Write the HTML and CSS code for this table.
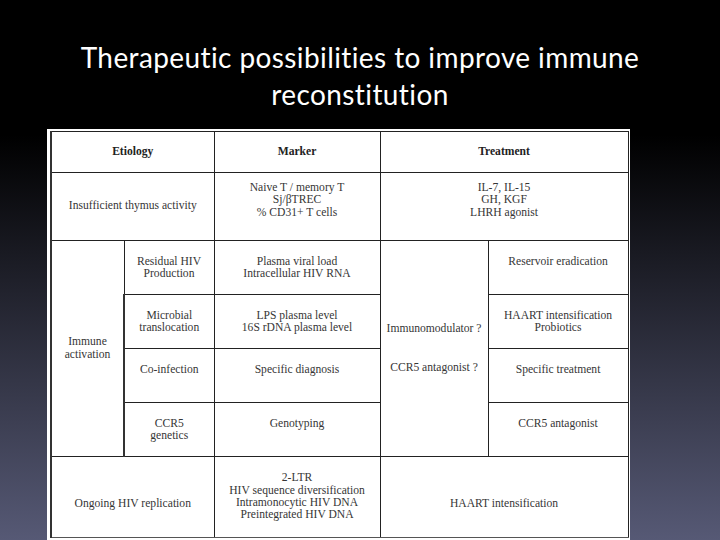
FILE: index.html
```html
<!DOCTYPE html>
<html>
<head>
<meta charset="utf-8">
<link rel="stylesheet" href="styles.css">
</head>
<body>
<div class="slide">
  <h1 class="title">Therapeutic possibilities to improve immune<br>reconstitution</h1>
  <div class="figure">
    <table class="grid">
      <colgroup>
        <col class="c1"><col class="c2"><col class="c3"><col class="c4"><col class="c5">
      </colgroup>
      <tr class="r-head">
        <th colspan="2">Etiology</th>
        <th>Marker</th>
        <th colspan="2">Treatment</th>
      </tr>
      <tr class="r-thymus">
        <td colspan="2">Insufficient thymus activity</td>
        <td class="top">Naive T / memory T<br>Sj/βTREC<br>% CD31+ T cells</td>
        <td colspan="2" class="top">IL-7, IL-15<br>GH, KGF<br>LHRH agonist</td>
      </tr>
      <tr class="r-sub grey-top">
        <td rowspan="4" class="mid">Immune<br>activation</td>
        <td>Residual HIV<br>Production</td>
        <td>Plasma viral load<br>Intracellular HIV RNA</td>
        <td rowspan="4" class="mid"><span class="im1">Immunomodulator ?</span><span class="im2">CCR5 antagonist ?</span></td>
        <td>Reservoir eradication</td>
      </tr>
      <tr class="r-sub">
        <td>Microbial<br>translocation</td>
        <td>LPS plasma level<br>16S rDNA plasma level</td>
        <td>HAART intensification<br>Probiotics</td>
      </tr>
      <tr class="r-sub grey-top">
        <td>Co-infection</td>
        <td>Specific diagnosis</td>
        <td>Specific treatment</td>
      </tr>
      <tr class="r-sub">
        <td>CCR5<br>genetics</td>
        <td>Genotyping</td>
        <td>CCR5 antagonist</td>
      </tr>
      <tr class="r-last grey-top">
        <td colspan="2" class="low">Ongoing HIV replication</td>
        <td>2-LTR<br>HIV sequence diversification<br>Intramonocytic HIV DNA<br>Preintegrated HIV DNA</td>
        <td colspan="2" class="low">HAART intensification</td>
      </tr>
    </table>
  </div>
</div>
</body>
</html>
```
FILE: styles.css
```css
html, body {
  margin: 0;
  padding: 0;
  background: #000;
}
.slide {
  width: 720px;
  height: 540px;
  overflow: hidden;
  background: linear-gradient(to bottom, #000 0%, #000 25%, #565975 100%);
}
.title {
  margin: 0;
  padding-top: 39px;
  font-family: Lato, "Open Sans", sans-serif;
  font-weight: 400;
  font-size: 28px;
  line-height: 37px;
  color: #fff;
  text-align: center;
  letter-spacing: 0.4px;
}
.figure {
  margin: 16px 0 0 47px;
  width: 583px;
  height: 420px;
  background: #fff;
  padding: 2px 0 0 3px;
  box-sizing: border-box;
}
.grid {
  border-collapse: collapse;
  table-layout: fixed;
  width: 577px;
  font-family: "Liberation Serif", "Times New Roman", serif;
  font-size: 11.6px;
  line-height: 12.3px;
  color: #363636;
}
.c1 { width: 73px; }
.c2 { width: 90px; }
.c3 { width: 166px; }
.c4 { width: 108px; }
.c5 { width: 140px; }
.grid th, .grid td {
  border: 1px solid #222;
  padding: 0;
  text-align: center;
  vertical-align: middle;
}
.grid th {
  font-weight: bold;
  color: #222;
}
.r-head { height: 41px; }
.r-thymus { height: 68px; }
.r-sub { height: 54px; }
.r-last { height: 81px; }
.grid .r-sub td {
  vertical-align: top;
  padding-top: 15px;
}
.grid .r-sub td.mid {
  vertical-align: middle;
  padding-top: 0;
}
.grid td.top {
  vertical-align: top;
  padding-top: 9px;
}
.grid td.low {
  padding-top: 15px;
}
.grey-top > td { border-top-color: #9a9a9a; }
.grid tr > :first-child { border-left: 2px solid #333; }
.im1, .im2 { display: block; }
.im2 { margin-top: 26px; }
.r-last td { border-bottom-color: #555; }
```
